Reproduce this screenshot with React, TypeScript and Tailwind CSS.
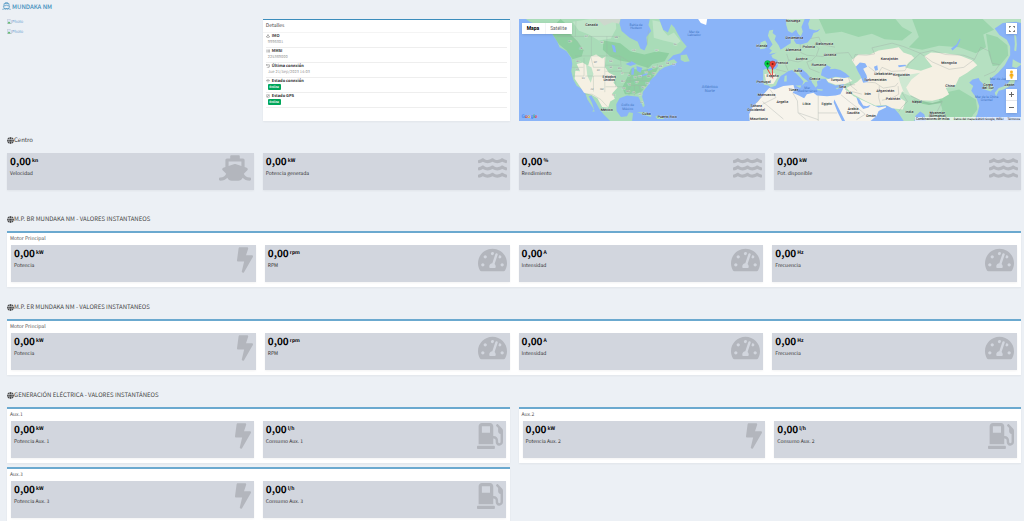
import type { ReactNode } from 'react';
import {
  FaBolt,
  FaGasPump,
  FaGlobe,
  FaHistory,
  FaRegCompass,
  FaShip,
  FaTachometerAlt,
  FaWater,
  FaBarcode,
  FaAnchor,
  FaWifi,
} from 'react-icons/fa';

type Metric = {
  value: string;
  unit: string;
  label: string;
  icon: ReactNode;
};

const ship = <FaShip className="w-8 h-[26px]" />;
const water = <FaWater className="w-[29px] h-[26px]" />;
const bolt = <FaBolt className="w-4 h-[26px]" />;
const gauge = <FaTachometerAlt className="w-[29px] h-[26px]" />;
const pump = <FaGasPump className="w-[26px] h-[26px]" />;

const centro: Metric[] = [
  { value: '0,00', unit: 'kn', label: 'Velocidad', icon: ship },
  { value: '0,00', unit: 'kW', label: 'Potencia generada', icon: water },
  { value: '0,00', unit: '%', label: 'Rendimiento', icon: water },
  { value: '0,00', unit: 'kW', label: 'Pot. disponible', icon: water },
];

const motor: Metric[] = [
  { value: '0,00', unit: 'kW', label: 'Potencia', icon: bolt },
  { value: '0,00', unit: 'rpm', label: 'RPM', icon: gauge },
  { value: '0,00', unit: 'A', label: 'Intensidad', icon: gauge },
  { value: '0,00', unit: 'Hz', label: 'Frecuencia', icon: gauge },
];

const auxiliares = [1, 2, 3].map((n) => ({
  title: `Aux.${n}`,
  items: [
    { value: '0,00', unit: 'kW', label: `Potencia Aux. ${n}`, icon: bolt },
    { value: '0,00', unit: 'l/h', label: `Consumo Aux. ${n}`, icon: pump },
  ],
}));

const detalles = [
  { icon: <FaAnchor />, title: 'IMO', text: '9996801' },
  { icon: <FaBarcode />, title: 'MMSI', text: '225369000' },
  { icon: <FaHistory />, title: 'Última conexión', text: 'Jue 21/Sep/2023 14:03' },
  { icon: <FaWifi />, title: 'Estado conexión', badge: 'Online' },
  { icon: <FaRegCompass />, title: 'Estado GPS', badge: 'Online' },
];

const countries: [number, number, string][] = [
  [234, 36, 'Canadá'],
  [287, 191, 'Estados'],
  [287, 202, 'Unidos'],
  [280, 290, 'México'],
  [398, 302, 'Cuba'],
  [460, 311, 'Puerto Rico'],
  [742, 100, 'Irlanda'],
  [835, 26, 'Noruega'],
  [839, 76, 'Dinamarca'],
  [836, 111, 'Alemania'],
  [882, 102, 'Polonia'],
  [928, 93, 'Bielorrusia'],
  [860, 138, 'Austria'],
  [945, 127, 'Ucrania'],
  [802, 149, 'Francia'],
  [912, 156, 'Rumanía'],
  [850, 173, 'Italia'],
  [774, 188, 'España'],
  [747, 207, 'Portugal'],
  [900, 198, 'Grecia'],
  [965, 202, 'Turquía'],
  [836, 231, 'Túnez'],
  [756, 245, 'Marruecos'],
  [725, 279, 'Sahara'],
  [725, 290, 'Occidental'],
  [733, 317, 'Mauritania'],
  [803, 267, 'Argelia'],
  [875, 273, 'Libia'],
  [935, 273, 'Egipto'],
  [982, 223, 'Siria'],
  [1002, 239, 'Irak'],
  [1057, 243, 'Irán'],
  [1014, 287, 'Arabia'],
  [1014, 298, 'Saudita'],
  [1067, 307, 'Omán'],
  [1122, 138, 'Kazajistán'],
  [1104, 182, 'Uzbekistán'],
  [1158, 186, 'Kirguistán'],
  [1080, 202, 'Turkmenistán'],
  [1110, 234, 'Afganistán'],
  [1133, 257, 'Pakistán'],
  [1204, 266, 'Nepal'],
  [1182, 296, 'India'],
  [1265, 299, 'Myanmar'],
  [1265, 309, '(Birmania)'],
  [1300, 149, 'Mongolia'],
  [1303, 220, 'China'],
  [1416, 216, 'Corea'],
  [1416, 226, 'del Sur'],
  [1480, 215, 'Japón'],
];

const seas: [number, number, string][] = [
  [367, 36, 'Bahía de'],
  [367, 46, 'Hudson'],
  [540, 58, 'Mar de'],
  [540, 68, 'Labrador'],
  [342, 276, 'Golfo de'],
  [342, 286, 'México'],
  [877, 224, 'Mar'],
  [877, 234, 'Mediterráneo'],
  [1452, 197, 'Mar de Japón'],
  [1412, 250, 'Mar de la China'],
  [1412, 260, 'Oriental'],
];

const states: [number, number, string][] = [
  [170, 86, 'BC'], [203, 105, 'AB'], [219, 70, 'NT'], [265, 88, 'SK'], [308, 73, 'MB'], [360, 110, 'ON'], [428, 112, 'QC'],
  [484, 92, 'NL'], [194, 144, 'WA'], [192, 168, 'OR'], [210, 195, 'NV'], [246, 147, 'MT'], [255, 172, 'WY'], [292, 144, 'ND'],
  [292, 163, 'SD'], [236, 229, 'AZ'], [265, 229, 'NM'], [300, 244, 'TX'], [326, 180, 'IA'], [318, 164, 'MN'], [328, 205, 'MO'],
  [346, 186, 'IL'], [364, 192, 'IN'], [378, 190, 'OH'], [397, 177, 'PA'], [405, 190, 'MD'], [401, 210, 'NC'], [388, 221, 'SC'],
  [379, 242, 'GA'], [360, 236, 'AL'], [343, 234, 'MS'], [346, 214, 'TN'], [384, 266, 'FL'], [420, 162, 'NY'], [440, 158, 'ME'],
  [461, 150, 'NB'], [330, 224, 'AR'], [369, 207, 'KY'], [420, 180, 'NJ'], [479, 152, 'NS'],
];

function MapDrawing() {
  return (
    <svg
      viewBox="12 16 1510 304"
      preserveAspectRatio="xMidYMid slice"
      className="absolute inset-0 w-full h-full font-[Roboto,sans-serif]"
      role="img"
      aria-label="Mapa"
    >
      <rect x="0" y="0" width="1540" height="330" fill="#8ab4f8" />

      {/* America */}
      <path
        fill="#a9dcb8"
        d="M30 10 50 24 85 38 112 52 132 82 139 100 160 112 174 132 177 150 174 172 180 196 190 215 205 224 216 238 222 256 238 280 244 292 236 292 242 286 236 266 226 246 234 244 248 266 258 284 270 300 292 322H355L358 296 346 294 340 306 322 308 309 290 308 270 318 252 340 244 360 246 374 248 382 264 388 280 393 274 385 248 388 232 402 214 410 196 424 186 436 170 452 160 470 154 490 146 480 136 460 142 478 124 500 118 518 98 503 80 490 58 482 42 472 32 462 56 448 48 436 16H408L404 34 412 52 398 70 400 92 392 110 380 104 372 84 348 72 324 52 318 30 322 10Z"
      />
      <path fill="#8ecfa1" d="M110 48 142 16 158 30 170 60 192 82 210 110 205 128 178 136 160 110 138 92Z" />
      <path fill="#8ecfa1" d="M270 80 320 88 350 112 392 122 430 112 466 118 452 142 416 150 404 162 384 156 352 146 318 140 290 128 268 108Z" />
      <path fill="#8ecfa1" d="M352 164 386 168 434 160 420 186 400 212 384 232 364 240 334 240 326 220 340 192Z" />
      <path fill="#bfe4c8" d="M178 24 230 16 306 18 308 44 292 74 256 80 226 62 196 50Z" />
      <path fill="#bfe4c8" d="M416 20 438 24 448 50 462 66 480 56 500 82 490 90 448 80 420 72Z" />
      <path fill="#cdd8cd" d="M236 10H322L316 30 296 26 272 36 258 22Z" />
      <path
        fill="#f5f0e3"
        d="M190 150 208 146 224 156 232 128 248 122 266 134 276 128 274 158 286 176 306 186 300 206 312 220 296 238 304 254 290 262 284 280 266 278 252 252 234 242 212 236 196 212 184 194 186 170 200 172Z"
      />
      <path fill="#bfe4c8" d="M218 152 234 160 240 180 232 206 222 186Z" />
      <path fill="#a9dcb8" d="M500 124 518 122 527 142 512 144 500 138Z" />
      <path fill="#ffffff" d="M548 10H580L576 34 560 28Z" />
      <path fill="#8ab4f8" d="M336 150 354 142 368 150 350 156ZM354 162 362 160 360 182 353 182ZM368 156 386 162 380 176 370 170ZM380 184 402 176 400 182 382 188ZM402 166 416 162 414 168 402 170ZM294 92 304 96 308 116 300 114Z" />
      <path fill="#a9dcb8" d="M370 294 394 294 414 304 410 308 388 300ZM424 306 448 306 450 314 430 314Z" />
      <path
        fill="none"
        stroke="#9fb3a8"
        strokeWidth="1"
        d="M186 126H318L352 146M176 160H210M172 66 192 82 212 112M186 68 188 22M234 68V126M280 68V126M132 68H320M212 132V186H180M232 128 240 160H276M216 186H306M240 186V232M274 130V234M276 154H318M276 172H322M306 186V218H330M276 218H306M216 240H236L262 256 284 280M320 130 324 176H350V220M326 200H400M340 214H398M346 220V244M362 214V244M376 214 382 244M372 176V202M386 176V196M400 154V176H424M430 150 438 170M404 50 400 92"
      />

      {/* Africa and Arabia */}
      <path
        fill="#f7f4ec"
        d="M764 222 780 226 806 216 836 213 840 226 834 236 852 244 868 252 876 240 896 236 906 244 936 246 962 244 976 240 984 224 988 206 1034 206 1046 232 1054 252 1072 272 1090 280 1112 276 1112 280 1090 290 1084 304 1066 320H990L974 288 958 256 956 264 968 294 982 322H706L704 300 716 276 732 260 742 246Z"
      />
      <path fill="#8ab4f8" d="M1022 244 1032 254 1044 274 1054 276 1066 272 1060 280 1044 284 1030 268Z" />

      {/* Europe and Asia */}
      <path
        fill="#b5e0c1"
        d="M816 10 814 32 820 52 832 58 844 48 850 60 858 68 864 54 860 40 872 10H888L880 30 884 46 904 50 916 46 908 54 896 58 890 72 878 86 858 92 844 90 838 80 840 66 828 72 828 88 818 94 804 104 792 110 782 118 770 124 774 132 788 138 790 156 782 166 754 164 746 168 746 196 748 212 762 214 768 220 784 214 790 200 798 186 812 178 820 172 832 168 842 176 856 190 866 202 862 214 872 204 880 202 862 188 850 170 850 162 860 164 876 178 886 190 892 206 902 220 908 214 906 202 918 194 932 194 940 206 962 214 986 210 990 226 1016 246 1050 262 1080 276 1112 274 1134 280 1150 298 1166 322H1196L1200 304 1214 292 1226 300 1232 322H1370L1384 300 1390 276 1382 252 1366 230 1372 216 1360 206 1370 196 1388 192 1392 200 1402 210 1406 226 1424 232 1434 222 1422 206 1424 194 1446 176 1466 154 1482 124 1482 98 1472 78 1450 64 1436 44 1460 28 1500 24 1522 30V10Z"
      />
      <path fill="#9bd5ac" d="M912 16H1140L1160 40 1190 56 1160 80 1108 76 1070 60 1030 70 980 54 932 60Z" />
      <path fill="#9bd5ac" d="M1190 16H1400L1434 48 1402 62 1410 100 1380 118 1330 100 1270 96 1220 108 1180 100 1210 70Z" />
      <path fill="#9bd5ac" d="M1410 60 1444 70 1474 94 1476 124 1452 154 1430 156 1418 120Z" />
      <path fill="#9bd5ac" d="M1286 236 1330 226 1380 256 1384 286 1360 318H1260L1280 286 1270 254Z" />
      <path
        fill="#f5f0e3"
        d="M1010 138 1030 122 1064 122 1090 110 1130 104 1150 100 1164 116 1188 124 1196 132 1180 146 1168 160 1184 164 1216 170 1250 158 1226 128 1246 116 1286 118 1330 124 1370 140 1384 154 1354 176 1330 190 1320 212 1290 222 1300 240 1280 252 1250 260 1214 258 1184 242 1160 232 1152 250 1170 262 1162 286 1130 282 1112 272 1080 274 1050 260 1014 240 994 222 1026 204 1040 190 1024 160Z"
      />
      <path fill="#f5f0e3" d="M934 196 960 190 1000 190 1012 200 990 210 962 212 940 204ZM750 180 780 178 788 190 776 210 756 208Z" />
      <path fill="#cfe8d2" d="M1146 176 1170 184 1214 176 1188 196 1172 220 1186 246 1166 238 1154 206Z" />
      <path fill="#8ecfa1" d="M1194 256 1250 266 1280 258 1276 266 1240 272 1196 264Z" />
      <path fill="#8ab4f8" d="M918 184 922 166 936 154 948 160 944 166 960 164 976 168 992 178 1004 188 988 192 962 188 940 194Z" />
      <path fill="#8ab4f8" d="M1022 158 1034 146 1050 148 1056 158 1044 164 1054 184 1058 204 1044 206 1036 186 1028 172Z" />
      <path fill="#8ab4f8" d="M1076 158 1086 154 1088 168 1080 170ZM1148 154 1170 152 1172 156 1150 160ZM1306 104 1322 92 1332 74 1334 78 1324 98 1310 110Z" />

      {/* Islands */}
      <path fill="#b5e0c1" d="M764 50 776 48 774 58 784 66 780 78 792 94 798 108 788 116 764 120 772 110 764 104 774 92 766 78 760 66ZM738 86 752 80 758 90 752 104 736 106Z" />
      <path fill="#b5e0c1" d="M1494 62 1500 66 1502 92 1500 112 1494 110 1496 90ZM1490 136 1504 144 1518 150 1500 162 1488 158ZM1494 166 1500 186 1494 208 1478 218 1462 226 1448 230 1440 246 1436 236 1448 222 1470 214 1484 196ZM1372 300 1380 302 1376 318 1370 314Z" />
      <path fill="#b5e0c1" d="M810 186 816 184 816 202 808 202ZM842 214 860 214 856 222ZM906 224 924 226 922 230 908 228ZM962 222 974 220 966 226Z" />

      <path
        fill="none"
        stroke="#9aa5a2"
        strokeWidth="1"
        d="M784 166 816 174M816 120 822 140 812 150 820 170M822 138 850 144 872 136M856 92 858 116 876 124 900 126M898 90 912 104 904 126 924 128 936 120 1000 116 1012 134M904 126 890 140 876 144 884 164 914 176M888 74 912 70 920 92 960 100M1000 190 1008 216 1026 230M988 212 1020 212M1010 232 1040 240M1014 142 1020 122 1054 124 1078 120 1070 102 1130 88 1164 98 1214 118 1180 150 1168 170 1128 172 1100 160 1088 180 1060 158M1056 204 1080 206 1104 222 1140 216 1148 206M1092 216 1090 250 1096 272M1148 216 1150 240 1130 252 1100 258M1160 236 1176 262 1158 280 1150 292M1186 246 1240 270 1280 262 1262 296M1214 118 1250 144 1300 166 1344 160 1376 136 1344 124 1290 122 1250 110 1214 118M1376 136 1394 100 1420 112 1428 148 1450 152 1436 172 1404 186M766 226 784 250 744 270M744 246 726 266M744 262 806 314M834 236 848 260 850 296 874 316M910 244V320M910 296H966M852 296 910 316M978 242 1000 260 1026 280 1050 300 1024 316"
      />
      <path fill="none" stroke="#e8483f" strokeWidth="3" d="M759 166 766 178 774 190 773 160" />

      <g fontSize="11" fontWeight="500" fill="#24272b" stroke="#ffffff" strokeWidth="2" strokeOpacity="0.5" paintOrder="stroke" textAnchor="middle">
        {countries.map(([x, y, name]) => (
          <text key={`${name}-${y}`} x={x} y={y}>{name}</text>
        ))}
      </g>
      <g fontSize="10" fill="#4374c4" textAnchor="middle">
        {seas.map(([x, y, name]) => (
          <text key={`${name}-${y}`} x={x} y={y}>{name}</text>
        ))}
        <text x="587" y="221" fontSize="12">Atlántico</text>
        <text x="587" y="234" fontSize="12">Norte</text>
      </g>
      <g fontSize="7" fill="#5a6b62" stroke="#ffffff" strokeWidth="2" strokeOpacity="0.6" paintOrder="stroke" textAnchor="middle">
        {states.map(([x, y, name]) => (
          <text key={name} x={x} y={y}>{name}</text>
        ))}
      </g>

      {/* Markers */}
      <path d="M759 167C758 157 750 156 750 149a9 9 0 0 1 18 0C768 156 760 157 759 167Z" fill="#00d94a" stroke="#126b2e" />
      <circle cx="759" cy="149" r="3" fill="#0b4a1d" />
      <path d="M774 168C773 158 765 157 765 150a9 9 0 0 1 18 0C783 157 775 158 774 168Z" fill="#ea4335" stroke="#9c1f17" />
      <circle cx="774" cy="150" r="3" fill="#7d1610" />
    </svg>
  );
}

function MapPanel() {
  return (
    <div className="relative h-[102px] overflow-hidden font-[Roboto,sans-serif]">
      <MapDrawing />
      <div className="absolute top-1 left-[3px] flex h-[11px] bg-white text-[5px] leading-[11px] shadow-sm">
        <button type="button" className="w-[23px] font-bold text-black">Mapa</button>
        <button type="button" className="w-[27px] border-l border-gray-100 text-[#666]">Satélite</button>
      </div>
      <button type="button" aria-label="Pantalla completa" className="absolute top-1 right-1 flex size-[11px] items-center justify-center bg-white shadow-sm">
        <svg className="size-[6px]" viewBox="0 0 18 18" fill="#666">
          <path d="M0 0v6h2V2h4V0H0zm16 0h-4v2h4v4h2V0h-2zm0 16h-4v2h6v-6h-2v4zM2 12H0v6h6v-2H2v-4z" />
        </svg>
      </button>
      <div className="absolute right-1 bottom-2 flex flex-col gap-[9px]">
        <button type="button" aria-label="Street View" className="flex size-[11px] items-center justify-center bg-white shadow-sm">
          <svg className="h-[9px] w-[5px]" viewBox="0 0 12 20">
            <circle cx="6" cy="4" r="3.5" fill="#f9b31c" />
            <path d="M2 8h8l1 6H9l-1 6H4l-1-6H1Z" fill="#f9b31c" />
            <path d="M3 8h6l-3 2Z" fill="#c77f12" />
          </svg>
        </button>
        <div className="flex w-[11px] flex-col bg-white text-[#666] shadow-sm">
          <button type="button" aria-label="Acercar" className="flex h-3 items-center justify-center border-b border-gray-200">
            <svg className="size-[5px]" viewBox="0 0 10 10" stroke="currentColor" strokeWidth="2"><path d="M0 5h10M5 0v10" /></svg>
          </button>
          <button type="button" aria-label="Alejar" className="flex h-3 items-center justify-center">
            <svg className="size-[5px]" viewBox="0 0 10 10" stroke="currentColor" strokeWidth="2"><path d="M0 5h10" /></svg>
          </button>
        </div>
      </div>
      <div className="absolute bottom-[1px] left-[3px] text-[5px] leading-[6px] font-medium">
        <span className="text-[#4285f4]">G</span>
        <span className="text-[#ea4335]">o</span>
        <span className="text-[#fbbc05]">o</span>
        <span className="text-[#4285f4]">g</span>
        <span className="text-[#34a853]">l</span>
        <span className="text-[#ea4335]">e</span>
      </div>
      <div className="absolute right-0 bottom-0 flex gap-1 bg-white/70 px-px text-[3px] leading-[4px] text-black">
        <button type="button">Combinaciones de teclas</button>
        <span>Datos del mapa ©2023 Google, INEGI</span>
        <a href="#terminos">Términos</a>
      </div>
    </div>
  );
}

function Photo() {
  return (
    <a href="#photo" className="flex h-[10px] items-start text-[4px] leading-[6px] text-[#6d9fd0]">
      <svg className="size-[5px]" viewBox="0 0 16 16">
        <path d="M1 1h9l5 5v9H1Z" fill="#dbe7f7" stroke="#9aa3ad" />
        <path d="M2 14 6 8l6 6Z" fill="#4caf50" />
      </svg>
      Photo
    </a>
  );
}

function Details() {
  return (
    <div className="h-[102px] border-t border-[#3c8dbc] bg-white text-[#444] shadow-xs">
      <h3 className="border-b border-[#f4f4f4] pl-[3px] text-[5px] leading-[12px]">Detalles</h3>
      <div className="mx-[3px]">
        {detalles.map((item) => (
          <div key={item.title} className="h-[15px] border-b border-[#eee]">
            <div className="flex items-center gap-px text-[4px] leading-[6px] font-bold text-[#333]">
              <span className="w-[5px] text-[#888]">{item.icon}</span>
              {item.title}
            </div>
            {item.badge ? (
              <span className="ml-[2px] block w-[13px] rounded-[1px] bg-[#00a65a] text-center text-[3px] leading-[6px] font-bold text-white">
                {item.badge}
              </span>
            ) : (
              <p className="ml-[2px] text-[4px] leading-[7px] text-[#999]">{item.text}</p>
            )}
          </div>
        ))}
      </div>
    </div>
  );
}

function MetricCard({ value, unit, label, icon }: Metric) {
  return (
    <div className="flex h-[37px] justify-between bg-[#d2d6de] pt-[2px] pr-[3px] pl-[3px] shadow-xs">
      <div>
        <p className="flex items-start gap-px font-bold text-black">
          <span className="text-[10px] leading-[12px]">{value}</span>
          <span className="text-[5px] leading-[12px]">{unit}</span>
        </p>
        <p className="mt-[3px] text-[5px] leading-[7px] text-[#333]">{label}</p>
      </div>
      <div className="text-[#b3b6bd]">{icon}</div>
    </div>
  );
}

function SectionTitle({ children }: { children: ReactNode }) {
  return (
    <h2 className="flex items-center text-[6px] leading-[10px] text-[#444]">
      <FaGlobe className="size-[7px] text-[#444]" />
      {children}
    </h2>
  );
}

function Box({ title, children }: { title: string; children: ReactNode }) {
  return (
    <div className="border-t-2 border-[#6ba9cf] bg-white px-1 pb-[5px] shadow-xs">
      <h3 className="-ml-px text-[5px] leading-[12px] text-[#555]">{title}</h3>
      {children}
    </div>
  );
}

export default function App() {
  return (
    <main className="h-screen overflow-hidden bg-[#ecf0f5] font-['Noto_Sans_CJK_SC',sans-serif] [text-rendering:geometricPrecision]">
      <h1 className="flex h-[19px] items-start gap-px pt-[1px] pl-[2px] text-[6px] leading-[11px] font-medium text-[#3c8dbc]">
        <svg className="mt-px h-2 w-[9px]" viewBox="0 0 27 24" fill="none" stroke="currentColor" strokeWidth="2">
          <path d="M10 5V2h7v3M6 12V5h15v7M4 13l9.500-3 9.500 3-3 7H7ZM1 22c3 0 4-1 6-2 2 2 4 2 6.500 0 2 2 4 2 6.500 0 2 1 3 2 6 2" />
        </svg>
        MUNDAKA NM
      </h1>

      <div className="mr-[3px] ml-[7px]">
        <section className="grid grid-cols-4 gap-x-[9px]">
          <div>
            <Photo />
            <Photo />
          </div>
          <Details />
          <div className="col-span-2">
            <MapPanel />
          </div>
        </section>

        <section className="mt-[14px]">
          <SectionTitle>Centro</SectionTitle>
          <div className="mt-[8px] grid grid-cols-4 gap-x-[9px]">
            {centro.map((item) => (
              <MetricCard key={item.label} {...item} />
            ))}
          </div>
        </section>

        {['M.P. BR MUNDAKA NM - VALORES INSTANTANEOS', 'M.P. ER MUNDAKA NM - VALORES INSTANTANEOS'].map((title, i) => (
          <section key={title} className={i === 0 ? 'mt-6' : 'mt-[15px]'}>
            <SectionTitle>{title}</SectionTitle>
            <div className="mt-[7px]">
              <Box title="Motor Principal">
                <div className="grid grid-cols-4 gap-x-[9px]">
                  {motor.map((item) => (
                    <MetricCard key={item.label} {...item} />
                  ))}
                </div>
              </Box>
            </div>
          </section>
        ))}

        <section className="mt-[15px]">
          <SectionTitle>GENERACIÓN ELÉCTRICA - VALORES INSTANTÁNEOS</SectionTitle>
          <div className="mt-[7px] grid grid-cols-2 gap-x-[9px] gap-y-1">
            {auxiliares.map((aux) => (
              <Box key={aux.title} title={aux.title}>
                <div className="grid grid-cols-2 gap-x-[9px]">
                  {aux.items.map((item) => (
                    <MetricCard key={item.label} {...item} />
                  ))}
                </div>
              </Box>
            ))}
          </div>
        </section>
      </div>
    </main>
  );
}
